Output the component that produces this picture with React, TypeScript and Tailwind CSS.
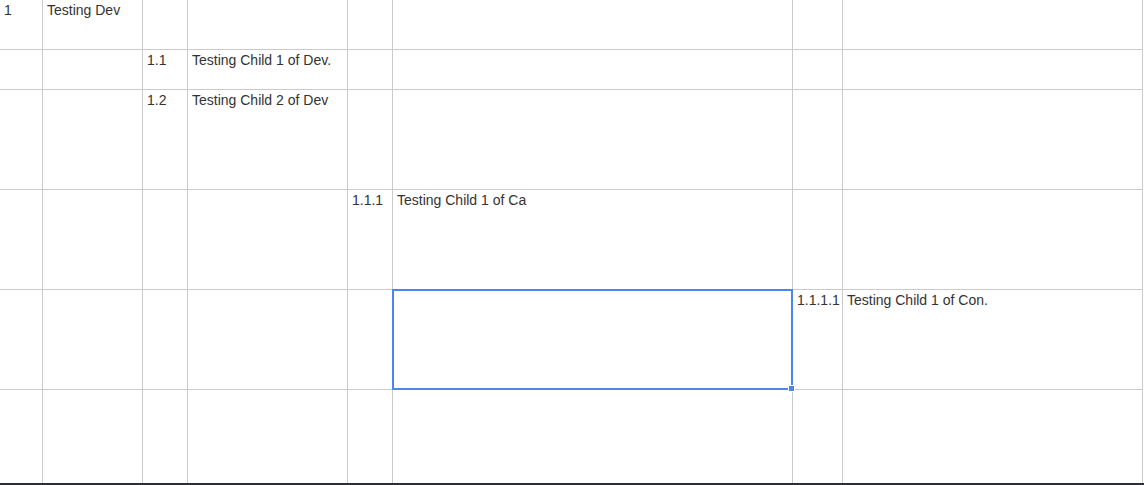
import React from "react";

const cols = [43, 100, 45, 160, 45, 400, 50, 300];
const rows = [50, 40, 100, 100, 100, 93];

// [row, col, text]
const cells: Record<string, string> = {
  "0-0": "1",
  "0-1": "Testing Dev",
  "1-2": "1.1",
  "1-3": "Testing Child 1 of Dev.",
  "2-2": "1.2",
  "2-3": "Testing Child 2 of Dev",
  "3-4": "1.1.1",
  "3-5": "Testing Child 1 of Ca",
  "4-6": "1.1.1.1",
  "4-7": "Testing Child 1 of Con.",
};

export default function App() {
  return (
    <div className="w-[1144px] h-[485px] bg-white overflow-hidden flex flex-col font-['Liberation_Sans',Arial,sans-serif] text-[14px] text-[#333]">
      <div className="grid grid-cols-[43px_100px_45px_160px_45px_400px_50px_300px] grid-rows-[50px_40px_100px_100px_100px_93px]">
        {rows.map((_, r) =>
          cols.map((_, c) => {
            const key = `${r}-${c}`;
            const selected = r === 4 && c === 5;
            return (
              <div
                key={key}
                className={
                  "relative border-r border-b border-[#cacaca] pl-[4px] pt-[2px] leading-[17px] whitespace-nowrap overflow-visible" +
                  (r === rows.length - 1 ? " border-b-0" : "")
                }
              >
                {cells[key]}
                {selected && (
                  <div className="absolute -left-px -top-px w-[401px] h-[101px] border-2 border-[#4a86f0] z-10">
                    <div className="absolute -right-[4px] -bottom-[4px] w-[7px] h-[7px] bg-[#4a86f0] border border-white" />
                  </div>
                )}
              </div>
            );
          })
        )}
      </div>
      <div className="h-[2px] bg-[#2a2e36] mt-auto" />
    </div>
  );
}
